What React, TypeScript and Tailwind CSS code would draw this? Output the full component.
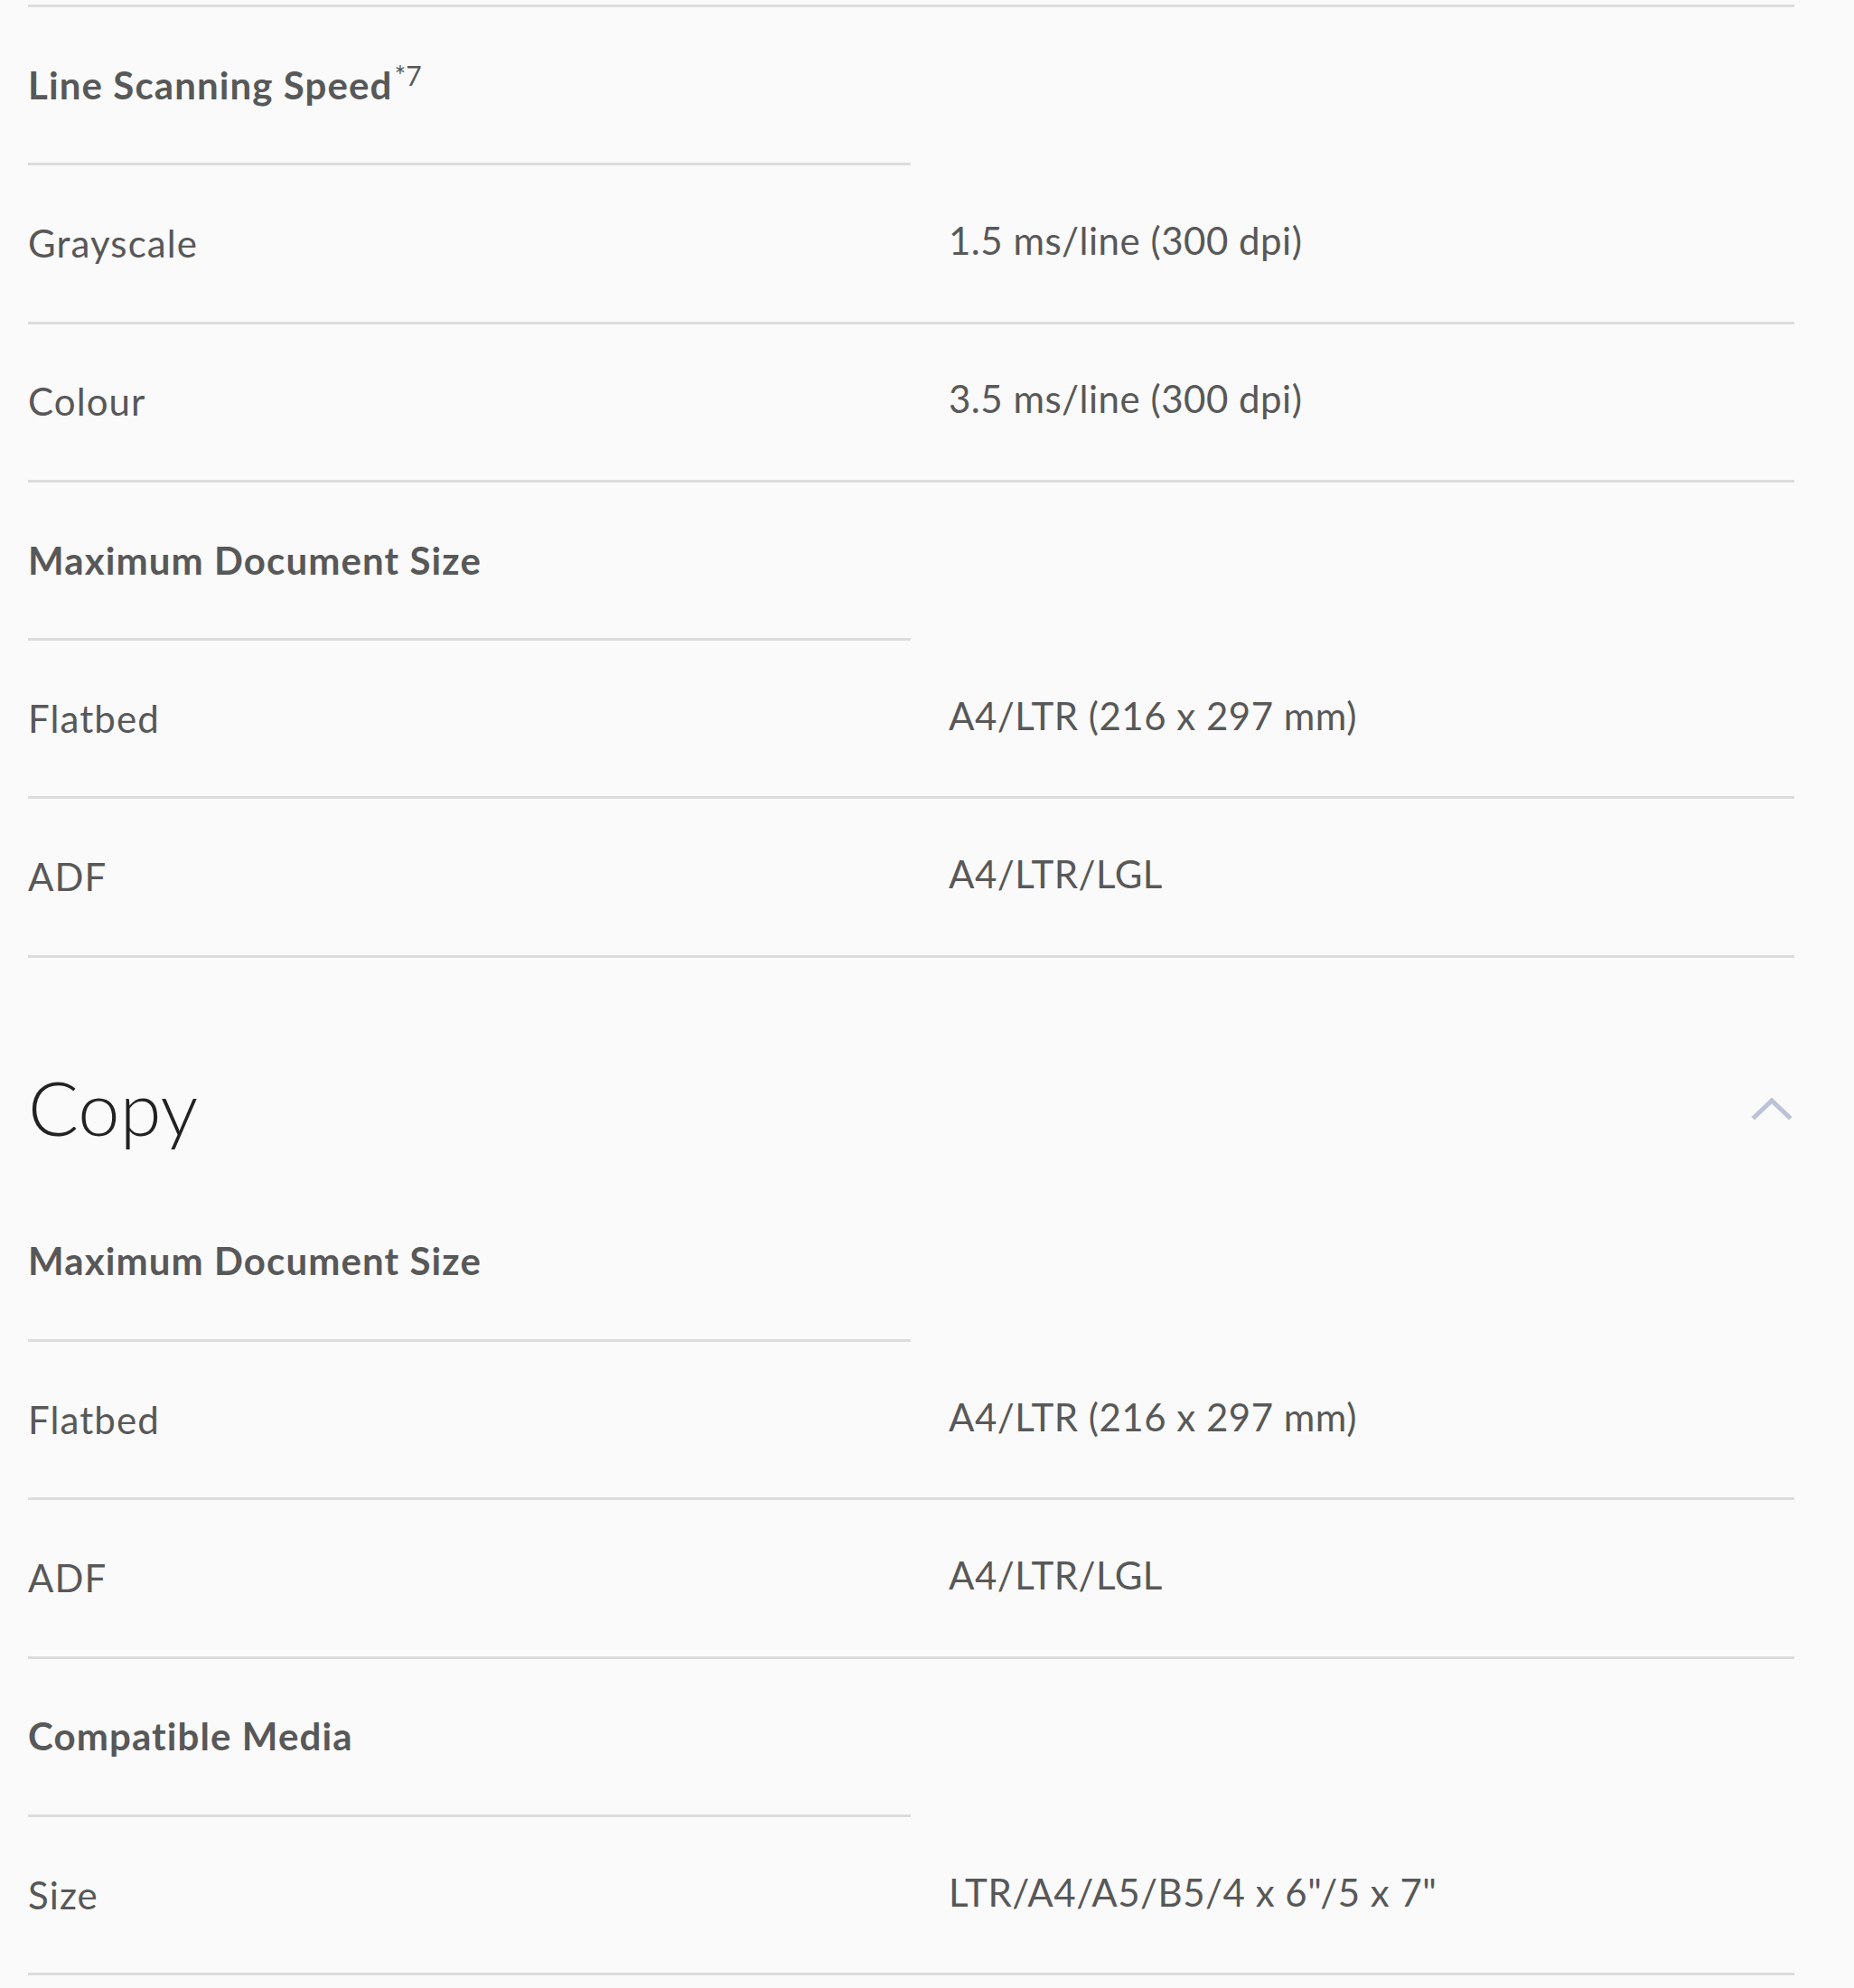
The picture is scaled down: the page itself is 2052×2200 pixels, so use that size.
type Row =
  | { kind: 'head'; label: string; sup?: string }
  | { kind: 'spec'; label: string; value: string }

const scanRows: Row[] = [
  { kind: 'head', label: 'Line Scanning Speed', sup: '*7' },
  { kind: 'spec', label: 'Grayscale', value: '1.5 ms/line (300 dpi)' },
  { kind: 'spec', label: 'Colour', value: '3.5 ms/line (300 dpi)' },
  { kind: 'head', label: 'Maximum Document Size' },
  { kind: 'spec', label: 'Flatbed', value: 'A4/LTR (216 x 297 mm)' },
  { kind: 'spec', label: 'ADF', value: 'A4/LTR/LGL' },
]

const copyRows: Row[] = [
  { kind: 'head', label: 'Maximum Document Size' },
  { kind: 'spec', label: 'Flatbed', value: 'A4/LTR (216 x 297 mm)' },
  { kind: 'spec', label: 'ADF', value: 'A4/LTR/LGL' },
  { kind: 'head', label: 'Compatible Media' },
  { kind: 'spec', label: 'Size', value: 'LTR/A4/A5/B5/4 x 6"/5 x 7"' },
]

function SpecRow({ row }: { row: Row }) {
  if (row.kind === 'head') {
    return (
      <div className="flex h-[175.3px]">
        <div className="flex w-[977px] items-center border-b-[3px] border-[#dcdcdc]">
          <span className="text-[42px] font-bold tracking-[1.1px] text-[#585858]">
            {row.label}
            {row.sup && (
              <sup className="ml-[2px] text-[30px] font-normal tracking-normal">{row.sup}</sup>
            )}
          </span>
        </div>
      </div>
    )
  }
  return (
    <div className="flex h-[175.3px] items-center border-b-[3px] border-[#dcdcdc] text-[42px] text-[#585858]">
      <div className="w-[977px] tracking-[1.1px]">{row.label}</div>
      <div className="mb-[6px] pl-[42px] tracking-[0.5px]">{row.value}</div>
    </div>
  )
}

function Chevron() {
  return (
    <svg width="46" height="32" viewBox="0 0 46 32" fill="none" className="mr-[2px]">
      <polyline
        points="4,27 23,9 42,27"
        stroke="#bcc3d8"
        strokeWidth="5"
        strokeLinecap="square"
        strokeLinejoin="miter"
      />
    </svg>
  )
}

export default function App() {
  return (
    <div
      className="min-h-[2200px] w-[2052px] bg-[#fafafa] pt-[5px]"
      style={{ fontFamily: 'Lato, "Open Sans", sans-serif' }}
    >
      <div className="ml-[31px] w-[1955px]">
        <div className="border-b-[3px] border-[#dcdcdc]" />
        {scanRows.map((r, i) => (
          <SpecRow key={i} row={r} />
        ))}
        <div className="flex items-center justify-between pb-[37px] pt-[117px]">
          <h2 className="text-[83px] font-light leading-[96px] text-[#222]">Copy</h2>
          <Chevron />
        </div>
        {copyRows.map((r, i) => (
          <SpecRow key={i} row={r} />
        ))}
      </div>
    </div>
  )
}
